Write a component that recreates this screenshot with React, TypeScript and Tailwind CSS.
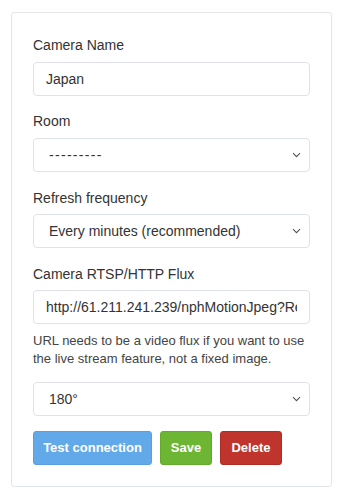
import { useState } from 'react';

const fieldClass =
  'block w-full h-[34px] rounded-[4px] border border-[#dfe2ea] bg-white text-[14px] text-[#333] outline-none';

function Chevron() {
  return (
    <svg
      className="pointer-events-none absolute right-[9px] top-1/2 -translate-y-1/2"
      width="9"
      height="6"
      viewBox="0 0 9 6"
      fill="none"
    >
      <path d="M1 1.2l3.5 3.5L8 1.2" stroke="#555" strokeWidth="1.1" />
    </svg>
  );
}

function SelectField({
  value,
  options,
  onChange,
  extra = '',
}: {
  value: string;
  options: string[];
  onChange: (v: string) => void;
  extra?: string;
}) {
  return (
    <div className="relative">
      <select
        value={value}
        onChange={(e) => onChange(e.target.value)}
        className={`${fieldClass} appearance-none pl-[15px] pr-8 ${extra}`}
      >
        {options.map((o) => (
          <option key={o} value={o}>
            {o}
          </option>
        ))}
      </select>
      <Chevron />
    </div>
  );
}

export default function App() {
  const [name, setName] = useState('Japan');
  const [room, setRoom] = useState('---------');
  const [refresh, setRefresh] = useState('Every minutes (recommended)');
  const [url, setUrl] = useState('http://61.211.241.239/nphMotionJpeg?Resolution=320x240&Quality=Standard');
  const [rotation, setRotation] = useState('180°');

  return (
    <div className="min-h-[500px] bg-white pt-[12px] pl-[11px] font-['Liberation_Sans',Arial,sans-serif] text-[#333]">
      <div className="w-[321px] rounded-[3px] border border-[#e3e5ec] px-[21px] pt-[22px] pb-[21px]">
        <label className="block text-[14px] leading-[20px]">Camera Name</label>
        <input
          type="text"
          value={name}
          onChange={(e) => setName(e.target.value)}
          className={`${fieldClass} mt-[7px] px-[12px]`}
        />

        <label className="mt-[15px] block text-[14px] leading-[20px]">Room</label>
        <div className="mt-[7px]">
          <SelectField
            value={room}
            options={['---------', 'Living room', 'Garden']}
            onChange={setRoom}
            extra="tracking-[1.3px]"
          />
        </div>

        <label className="mt-[16px] block text-[14px] leading-[20px]">Refresh frequency</label>
        <div className="mt-[6px]">
          <SelectField
            value={refresh}
            options={['Every seconds', 'Every minutes (recommended)', 'Every hours']}
            onChange={setRefresh}
          />
        </div>

        <label className="mt-[16px] block text-[14px] leading-[20px]">Camera RTSP/HTTP Flux</label>
        <input
          type="text"
          value={url}
          onChange={(e) => setUrl(e.target.value)}
          className={`${fieldClass} mt-[6px] px-[12px]`}
        />
        <p className="mt-[8px] text-[13px] leading-[18px] text-[#444]">
          URL needs to be a video flux if you want to use the live stream feature, not a fixed image.
        </p>

        <div className="mt-[14px]">
          <SelectField value={rotation} options={['0°', '90°', '180°', '270°']} onChange={setRotation} />
        </div>

        <div className="mt-[15px] flex gap-[8px] text-[13px] font-bold text-white">
          <button className="h-[34px] w-[119px] rounded-[3px] border border-[#5b9fe0] bg-[#62a9ea]">
            Test connection
          </button>
          <button className="h-[34px] w-[52px] rounded-[3px] border border-[#64ab2c] bg-[#6db633]">Save</button>
          <button className="h-[34px] w-[62px] rounded-[3px] border border-[#b02c27] bg-[#c0342e]">Delete</button>
        </div>
      </div>
    </div>
  );
}
